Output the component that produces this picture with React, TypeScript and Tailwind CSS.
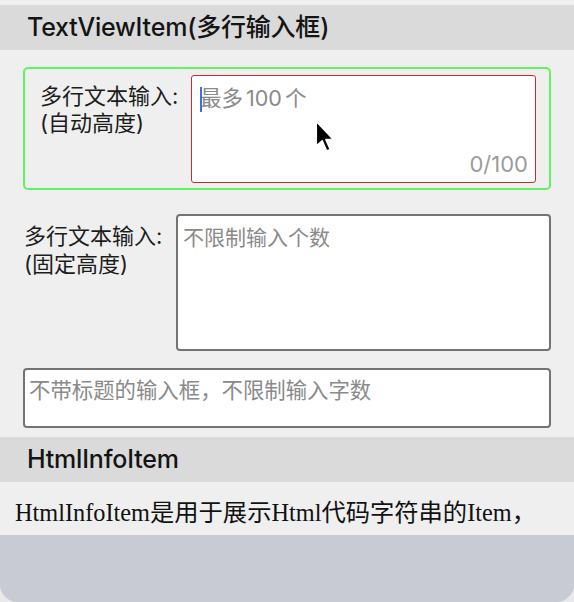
const SANS = { fontFamily: '"Inter", "Noto Sans CJK SC", sans-serif' };

function SectionHeader({ title }: { title: string }) {
  return (
    <div className="h-[45px] bg-[#dadada] pl-[27px] flex items-center text-[25px] text-[#141414] font-medium tracking-[-0.2px]">
      {title}
    </div>
  );
}

function Pointer() {
  return (
    <svg className="absolute left-[314px] top-[120px]" width="24" height="35" viewBox="0 0 22 32">
      <path
        d="M2 1 L2 24 L7.5 19 L11.5 28.5 L15 27 L11 18 L18 18 Z"
        fill="#000"
        stroke="#fff"
        strokeWidth="1.6"
        strokeLinejoin="round"
      />
    </svg>
  );
}

export default function App() {
  return (
    <div className="w-[574px] h-[602px] bg-[#e9e9e9] relative" style={SANS}>
      <div className="h-full flex flex-col bg-[#c8cbd3] rounded-b-[18px] overflow-hidden">
        <div className="h-[5px] bg-[#f0f0f0]" />
        <SectionHeader title="TextViewItem(多行输入框)" />

        <div className="bg-[#efefef] px-[23px] pt-[17px] pb-[9px]">
          {/* auto height, focused */}
          <div className="h-[123px] border-2 border-[#62f262] rounded-[5px] flex pl-[15px] pr-[13px] pt-[6px]">
            <div className="w-[151px] pt-[8px] text-[22px] leading-[27px] text-[#1c1c1c]">
              多行文本输入:
              <br />
              (自动高度)
            </div>
            <div className="flex-1 h-[108px] bg-white border border-[#cc2a2e] rounded-[3px] relative pl-[8px] pt-[9px]">
              <span className="absolute left-[8px] top-[11px] w-[2px] h-[25px] bg-[#3f6fe8]" />
              <span className="text-[21.5px] leading-[27px] text-[#8a8a8a]">
                最多<span className="mx-[3px]">100</span>个
              </span>
              <span className="absolute right-[7px] bottom-[4px] text-[22px] leading-[27px] text-[#9b9b9b]">0/100</span>
            </div>
          </div>

          {/* fixed height */}
          <div className="flex mt-[24px]">
            <div className="w-[153px] pl-[1px] pt-[8px] text-[22px] leading-[28px] text-[#1c1c1c]">
              多行文本输入:
              <br />
              (固定高度)
            </div>
            <div className="flex-1 h-[137px] bg-white border-2 border-[#747474] rounded-[4px] pl-[5px] pt-[9px] text-[21px] leading-[26px] text-[#8a8a8a]">
              不限制输入个数
            </div>
          </div>

          {/* no title */}
          <div className="mt-[17px] h-[60px] bg-white border-2 border-[#747474] rounded-[4px] pl-[4px] pt-[7px] text-[21.4px] leading-[26px] text-[#8a8a8a]">
            不带标题的输入框，不限制输入字数
          </div>
        </div>

        <SectionHeader title="HtmlInfoItem" />

        <div
          className="h-[53px] bg-[#efefef] pl-[15px] pt-[17px] text-[24.3px] leading-[28px] text-[#111]"
          style={{ fontFamily: '"Liberation Serif", "Noto Sans CJK SC", serif' }}
        >
          HtmlInfoItem是用于展示Html代码字符串的Item，
        </div>

        <div className="flex-1 bg-[#c8cbd3]" />
      </div>
      <Pointer />
    </div>
  );
}
